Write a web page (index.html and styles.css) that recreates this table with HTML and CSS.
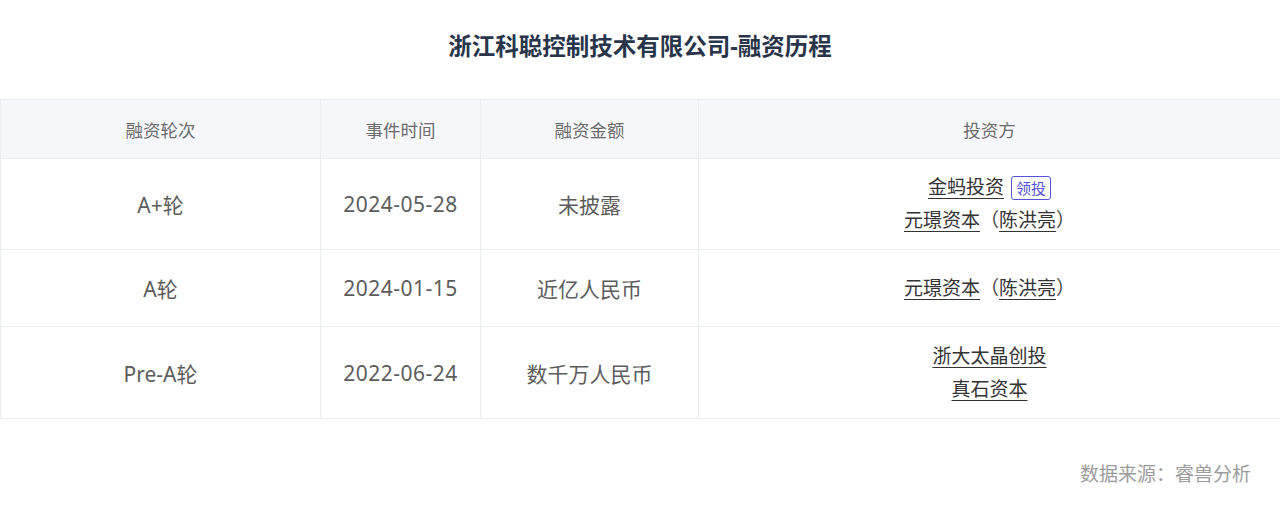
FILE: index.html
```html
<!DOCTYPE html>
<html lang="zh">
<head>
<meta charset="utf-8">
<link rel="stylesheet" href="styles.css">
</head>
<body>
<div class="page">
  <h1 class="title">浙江科聪控制技术有限公司-融资历程</h1>
  <table class="fin">
    <colgroup>
      <col class="c1"><col class="c2"><col class="c3"><col class="c4">
    </colgroup>
    <thead>
      <tr class="head"><th>融资轮次</th><th>事件时间</th><th>融资金额</th><th>投资方</th></tr>
    </thead>
    <tbody>
      <tr class="r1">
        <td>A+轮</td><td class="date">2024-05-28</td><td>未披露</td>
        <td class="inv">
          <div class="line"><span class="link">金蚂投资</span><span class="tag">领投</span></div>
          <div class="line"><span class="link">元璟资本</span><span class="paren">（</span><span class="link">陈洪亮</span><span class="paren">）</span></div>
        </td>
      </tr>
      <tr class="r2">
        <td>A轮</td><td class="date">2024-01-15</td><td>近亿人民币</td>
        <td class="inv">
          <div class="line"><span class="link">元璟资本</span><span class="paren">（</span><span class="link">陈洪亮</span><span class="paren">）</span></div>
        </td>
      </tr>
      <tr class="r3">
        <td>Pre-A轮</td><td class="date">2022-06-24</td><td>数千万人民币</td>
        <td class="inv">
          <div class="line"><span class="link">浙大太晶创投</span></div>
          <div class="line"><span class="link">真石资本</span></div>
        </td>
      </tr>
    </tbody>
  </table>
  <div class="source">数据来源：睿兽分析</div>
</div>
</body>
</html>
```
FILE: styles.css
```css
* { box-sizing: border-box; }
html, body { margin: 0; padding: 0; background: #fff; }
body {
  font-family: "Noto Sans", "Noto Sans CJK SC", sans-serif;
  width: 1280px;
  height: 525px;
  overflow: hidden;
  text-spacing-trim: space-all;
}
.page { display: flex; flex-direction: column; }
.title {
  margin: 0;
  height: 99px;
  padding-top: 28px;
  text-align: center;
  font-size: 23.5px;
  line-height: 36px;
  font-weight: 700;
  color: #28354a;
}
.fin {
  width: 1280px;
  border-collapse: collapse;
  table-layout: fixed;
}
.c1 { width: 320px; }
.c2 { width: 160px; }
.c3 { width: 218px; }
.c4 { width: 582px; }
.fin th, .fin td {
  border: 1px solid #e9edf2;
  text-align: center;
  vertical-align: middle;
  padding: 0;
}
.fin th {
  background: #f6f7fa;
  font-weight: 400;
  font-size: 17.5px;
  color: #6b6b6b;
  height: 59px;
}
.fin td {
  font-size: 21px;
  color: #5c5c5c;
}
.fin td.date { letter-spacing: 0.5px; }
.r1 { height: 91px; }
.r2 { height: 77px; }
.r3 { height: 92px; }
.fin td.inv { font-size: 19px; color: #333; }
.line { line-height: 33px; display: flex; justify-content: center; align-items: center; }
.link {
  text-decoration: underline;
  text-underline-offset: 4px;
  text-decoration-thickness: 1px;
  color: #333;
}
.paren { display: inline-block; width: 1em; text-align: center; color: #444; }
.tag {
  margin-left: 7px;
  font-size: 15px;
  line-height: 22px;
  padding: 0 4px;
  color: #5552d9;
  border: 1px solid #5552d9;
  border-radius: 3px;
}
.source {
  margin-top: 40px;
  padding-right: 29px;
  text-align: right;
  font-size: 19px;
  color: #9b9b9b;
}
```
